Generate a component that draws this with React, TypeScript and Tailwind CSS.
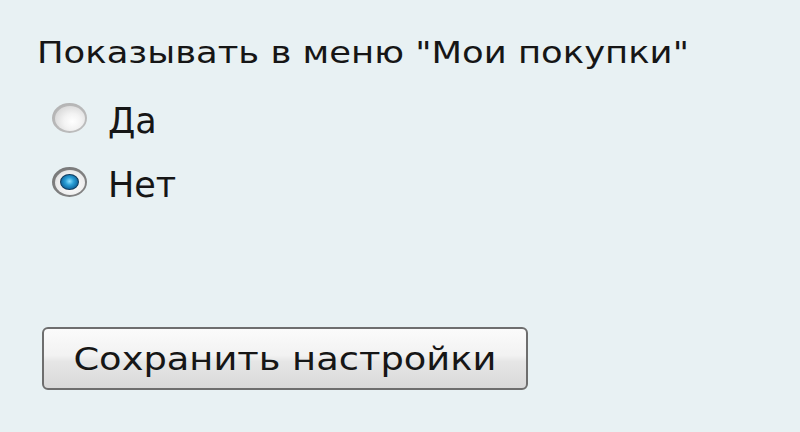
import React from "react";

function Radio({ checked }: { checked: boolean }) {
  if (!checked) {
    return (
      <span className="mt-[2px] flex h-[30px] w-[35px] shrink-0 items-center justify-center rounded-[50%] bg-[radial-gradient(ellipse_at_55%_55%,#cfcfcf_0%,#a9a9a9_100%)]">
        <span className="h-[25px] w-[30px] rounded-[50%] bg-[radial-gradient(ellipse_at_58%_62%,#ffffff_0%,#f3f3f3_35%,#dadada_75%,#c9c9c9_100%)]" />
      </span>
    );
  }
  return (
    <span className="mt-[2px] flex h-[30px] w-[35px] shrink-0 items-center justify-center rounded-[50%] bg-[radial-gradient(ellipse_at_55%_55%,#9a9a9a_0%,#6c6c6c_100%)]">
      <span className="flex h-[25px] w-[30px] items-center justify-center rounded-[50%] bg-[radial-gradient(ellipse_at_55%_60%,#ffffff_0%,#ececec_60%,#cfcfcf_100%)]">
        <span className="h-[16px] w-[19px] rounded-[50%] border border-[#0d3a5c] bg-[radial-gradient(ellipse_at_50%_45%,#8ee0ff_0%,#2a9fd6_35%,#126aa3_70%,#0a3d66_100%)]" />
      </span>
    </span>
  );
}

export default function App() {
  return (
    <div
      className="h-[432px] w-[800px] bg-[#e8f1f3] pl-[37px] pt-[35px] text-[#161616]"
      style={{ fontFamily: '"DejaVu Sans", Verdana, sans-serif' }}
    >
      <div className="text-[30px] leading-[36px]">
        <span className="inline-block origin-left scale-x-[1.18] whitespace-nowrap">Показывать в меню "Мои покупки"</span>
      </div>
      <div className="ml-[15px] mt-[30px] flex flex-col gap-[24px]">
        <label className="flex items-start gap-[21px] text-[35px] leading-[40px]">
          <Radio checked={false} />
          <span>Да</span>
        </label>
        <label className="flex items-start gap-[21px] text-[35px] leading-[40px]">
          <Radio checked={true} />
          <span>Нет</span>
        </label>
      </div>
      <button
        className="ml-[5px] mt-[122px] flex h-[63px] w-[486px] items-center justify-center rounded-[6px] border-[2px] border-[#6e6e6e] bg-[linear-gradient(#fbfbfb_0%,#f2f2f2_45%,#e6e6e6_55%,#d9d9d9_100%)] text-[32px] text-[#161616]"
        style={{ fontFamily: '"DejaVu Sans", Verdana, sans-serif' }}
      >
        <span className="inline-block scale-x-[1.15] whitespace-nowrap">Сохранить настройки</span>
      </button>
    </div>
  );
}
